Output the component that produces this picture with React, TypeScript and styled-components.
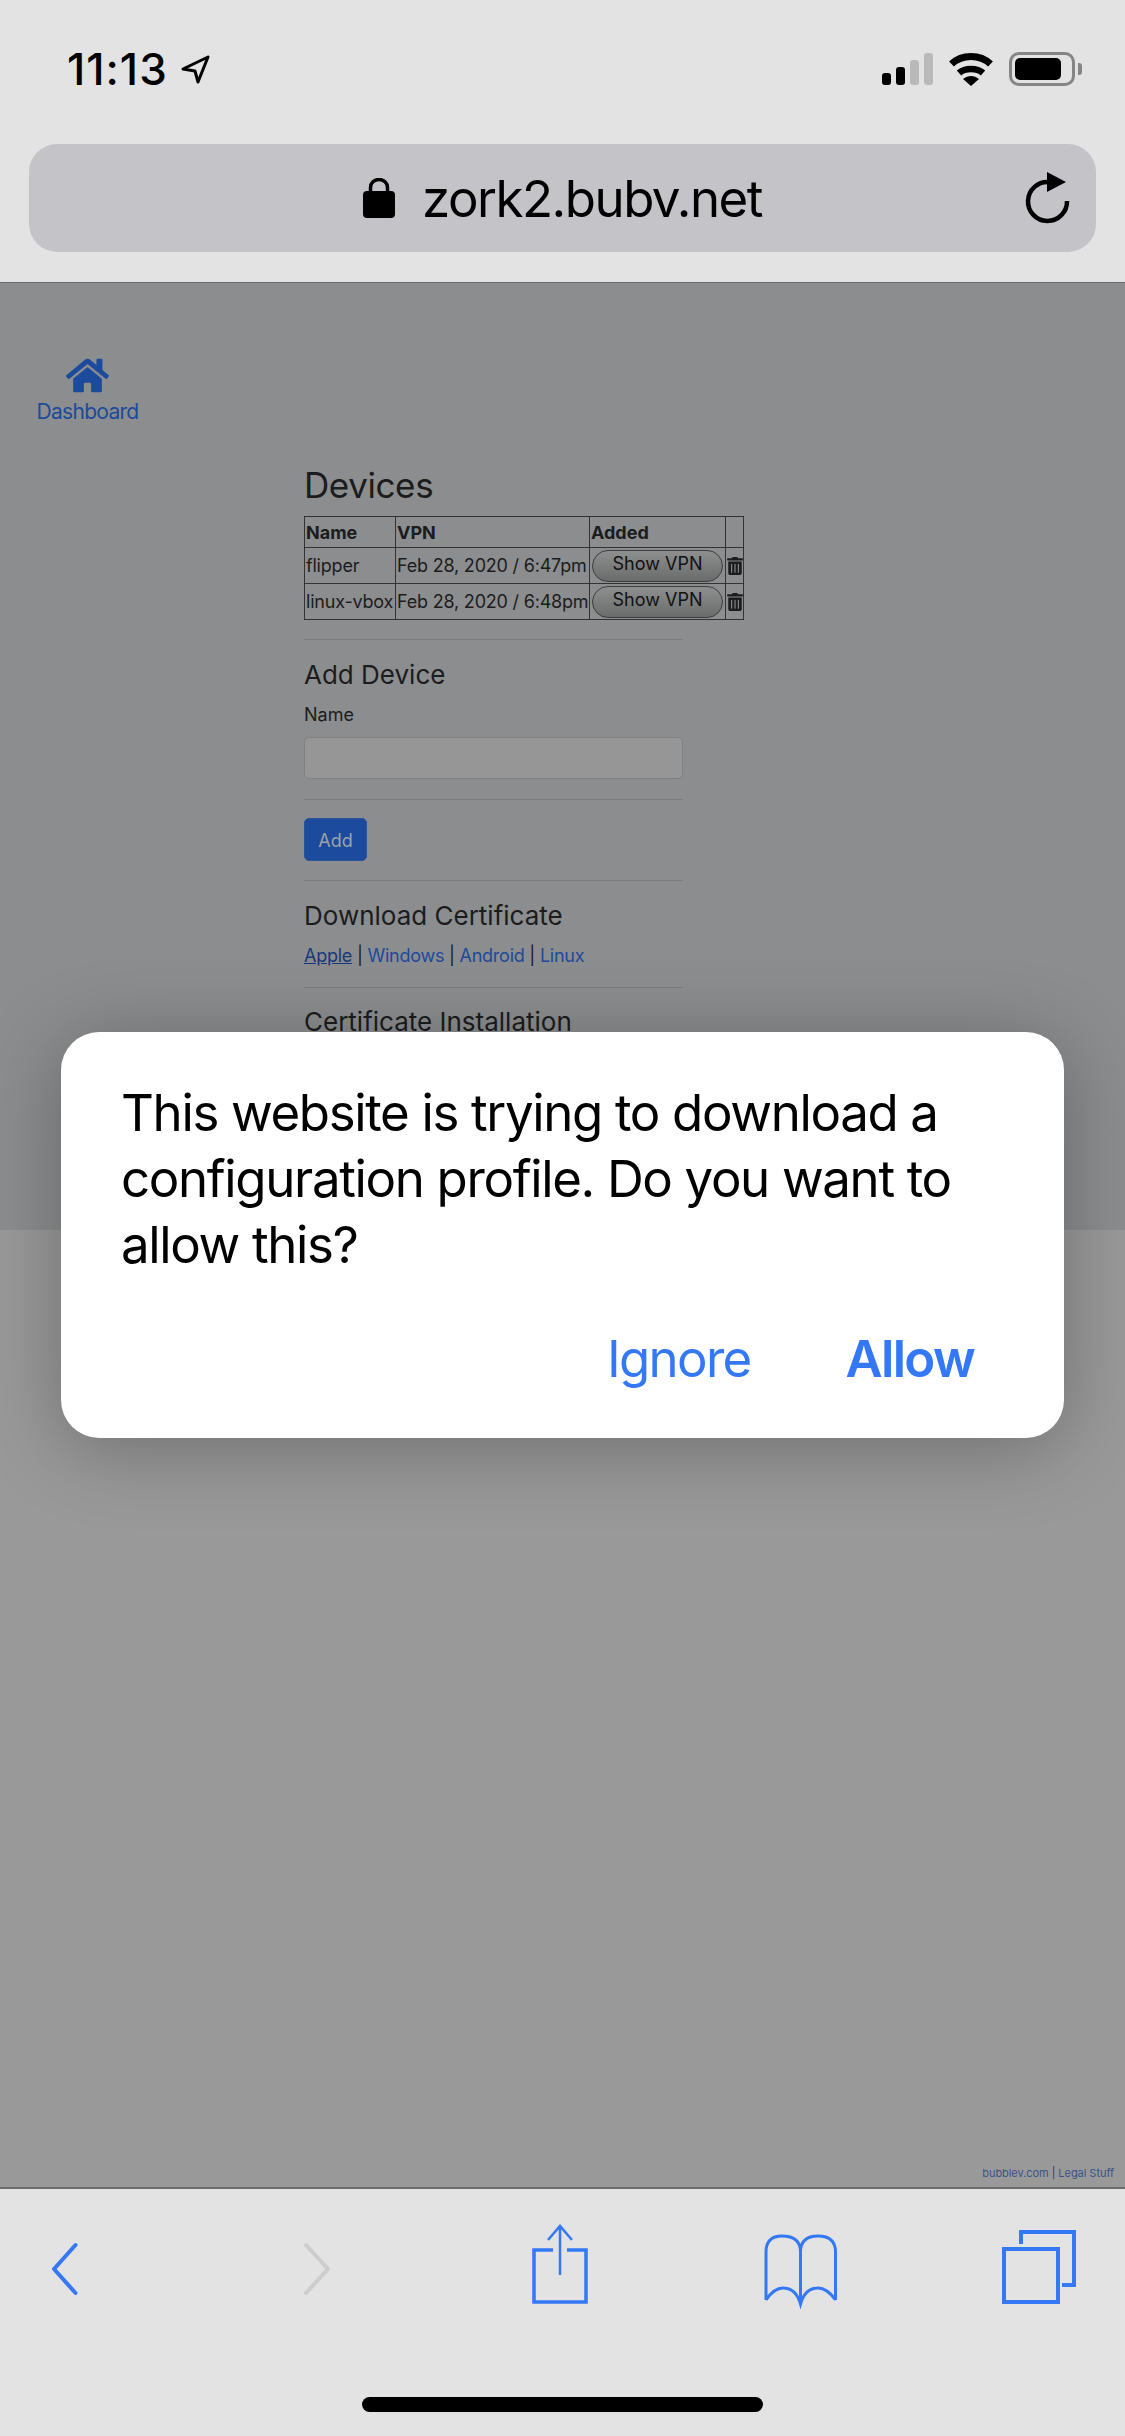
import React from 'react';
import styled, { createGlobalStyle } from 'styled-components';
import { FaHome, FaTrashAlt } from 'react-icons/fa';

const devices = [
  { name: 'flipper', added: 'Feb 28, 2020 / 6:47pm' },
  { name: 'linux-vbox', added: 'Feb 28, 2020 / 6:48pm' },
];

function App() {
  return (
    <>
      <GlobalStyle />
      <Screen>
        <Header>
          <StatusBar>
            <TimeGroup>
              <Time>11:13</Time>
              <svg width="31" height="29" viewBox="0 0 31 29">
                <path d="M28 2 L3 14 L15 16 L18 27 Z" fill="none" stroke="#000" strokeWidth="3" strokeLinejoin="round" />
              </svg>
            </TimeGroup>
            <StatusIcons>
              <Signal>
                <SignalBar $height={12} $on />
                <SignalBar $height={18} $on />
                <SignalBar $height={25} />
                <SignalBar $height={32} />
              </Signal>
              <svg width="46" height="33" viewBox="0 0 46 33">
                <path d="M3.5 11 C14 1 32 1 42.5 11" fill="none" stroke="#000" strokeWidth="7" />
                <path d="M11 20 C17 14.5 29 14.5 35 20" fill="none" stroke="#000" strokeWidth="6.5" />
                <path d="M23 33 L15 26 C20 22 26 22 31 26 Z" fill="#000" />
              </svg>
              <Battery>
                <BatteryCase>
                  <BatteryLevel />
                </BatteryCase>
                <BatteryNub />
              </Battery>
            </StatusIcons>
          </StatusBar>
          <UrlBar>
            <span />
            <UrlHost>
              <svg width="32" height="40" viewBox="0 0 32 40">
                <path d="M7.5 15 V9.5 a8.5 8 0 0 1 17 0 V15" fill="none" stroke="#000" strokeWidth="3.5" />
                <rect x="0" y="13" width="32" height="27" rx="4" fill="#000" />
              </svg>
              <UrlText>zork2.bubv.net</UrlText>
            </UrlHost>
            <ReloadIcon width="45" height="52" viewBox="0 0 45 52">
              <path d="M24 10 A 19.5 19.5 0 1 0 42 29" fill="none" stroke="#000" strokeWidth="4.5" />
              <path d="M22 0 L41 10 L22 20 Z" fill="#000" />
            </ReloadIcon>
          </UrlBar>
        </Header>

        <Page>
          <Main>
            <Sidebar>
              <NavLink>
                <FaHome size={43} />
                <NavLabel>Dashboard</NavLabel>
              </NavLink>
            </Sidebar>
            <Content>
              <PageTitle>Devices</PageTitle>
              <DeviceTable>
                <thead>
                  <tr>
                    <HeadCell $width={91}>Name</HeadCell>
                    <HeadCell $width={194}>VPN</HeadCell>
                    <HeadCell $width={136}>Added</HeadCell>
                    <HeadCell $width={18} />
                  </tr>
                </thead>
                <tbody>
                  {devices.map((device) => (
                    <tr key={device.name}>
                      <Cell>{device.name}</Cell>
                      <Cell>{device.added}</Cell>
                      <Cell>
                        <ShowButton>Show VPN</ShowButton>
                      </Cell>
                      <TrashCell>
                        <FaTrashAlt size={18} />
                      </TrashCell>
                    </tr>
                  ))}
                </tbody>
              </DeviceTable>
              <Divider $before={19} />
              <SectionTitle $top={18}>Add Device</SectionTitle>
              <FieldLabel>Name</FieldLabel>
              <NameInput />
              <Divider $before={20} />
              <AddButton>Add</AddButton>
              <Divider $before={19} />
              <SectionTitle $top={18}>Download Certificate</SectionTitle>
              <LinkRow>
                <PageLink $active>Apple</PageLink> | <PageLink>Windows</PageLink> | <PageLink>Android</PageLink> |{' '}
                <PageLink>Linux</PageLink>
              </LinkRow>
              <Divider $before={20} />
              <SectionTitle $top={17}>Certificate Installation</SectionTitle>
            </Content>
          </Main>
          <Rest>
            <FooterLine>
              <FooterLink>bubblev.com</FooterLink> | <FooterLink>Legal Stuff</FooterLink>
            </FooterLine>
          </Rest>
        </Page>

        <Toolbar>
          <svg width="100" height="90" viewBox="0 0 100 90">
            <path d="M60.5 23 L39 47 L60.5 71" fill="none" stroke="#3478f6" strokeWidth="4" strokeLinecap="round" strokeLinejoin="round" />
          </svg>
          <svg width="100" height="90" viewBox="0 0 100 90">
            <path d="M47 23 L69 47 L47 71" fill="none" stroke="#cdcdcd" strokeWidth="4" strokeLinecap="round" strokeLinejoin="round" />
          </svg>
          <svg width="100" height="90" viewBox="0 0 100 90">
            <path d="M51 28 H32 V80 H84 V28 H65" fill="none" stroke="#3478f6" strokeWidth="3.5" />
            <path d="M58 4 V53 M46 18 L58 4 L70 18" fill="none" stroke="#3478f6" strokeWidth="2.5" />
          </svg>
          <svg width="100" height="90" viewBox="0 0 100 90">
            <path
              d="M20 78 V30 Q20 14 36 14 Q54.5 14 54.5 30 V82 M54.5 30 Q54.5 14 72 14 Q89.5 14 89.5 30 V78 M20 78 Q28 66 37 66 Q50 66 54.5 82 Q59 66 72 66 Q81 66 89.5 78"
              fill="none"
              stroke="#3478f6"
              strokeWidth="3"
            />
          </svg>
          <svg width="100" height="90" viewBox="0 0 100 90">
            <rect x="15" y="27" width="54" height="53" fill="none" stroke="#3478f6" strokeWidth="4" />
            <path d="M32 22 V10 H85 V63 H73" fill="none" stroke="#3478f6" strokeWidth="4" />
          </svg>
        </Toolbar>
        <HomeIndicator />

        <Dialog>
          <DialogText>This website is trying to download a configuration profile. Do you want to allow this?</DialogText>
          <DialogActions>
            <DialogAction>Ignore</DialogAction>
            <DialogAction $primary>Allow</DialogAction>
          </DialogActions>
        </Dialog>
      </Screen>
    </>
  );
}

export default App;

const GlobalStyle = createGlobalStyle`
  body {
    margin: 0;
    font-family: Inter, 'Liberation Sans', sans-serif;
  }
`;

const Screen = styled.div`
  position: relative;
  width: 1125px;
  height: 2436px;
  display: flex;
  flex-direction: column;
  overflow: hidden;
  background-color: #e3e3e3;
`;

const Header = styled.header`
  height: 282px;
  flex-shrink: 0;
  border-bottom: 1px solid #6a6a6a;
`;

const StatusBar = styled.div`
  height: 138px;
  margin-bottom: 6px;
  padding: 0 43px 0 67px;
  display: flex;
  justify-content: space-between;
  align-items: center;
`;

const TimeGroup = styled.div`
  display: flex;
  align-items: center;
  gap: 12px;
`;

const Time = styled.span`
  font-size: 44px;
  font-weight: 500;
  letter-spacing: 1px;
  color: #000;
`;

const StatusIcons = styled.div`
  display: flex;
  align-items: center;
  gap: 15px;
`;

const Signal = styled.div`
  display: flex;
  align-items: flex-end;
  gap: 5px;
  height: 32px;
`;

const SignalBar = styled.div<{ $height: number; $on?: boolean }>`
  width: 9px;
  height: ${(p) => p.$height}px;
  border-radius: 3px;
  background-color: ${(p) => (p.$on ? '#000' : '#b9b9b9')};
`;

const Battery = styled.div`
  display: flex;
  align-items: center;
  gap: 3px;
`;

const BatteryCase = styled.div`
  width: 66px;
  height: 34px;
  box-sizing: border-box;
  padding: 3px;
  border: 3px solid #858585;
  border-radius: 10px;
`;

const BatteryLevel = styled.div`
  width: 46px;
  height: 22px;
  border-radius: 5px;
  background-color: #000;
`;

const BatteryNub = styled.div`
  width: 4px;
  height: 12px;
  border-radius: 0 3px 3px 0;
  background-color: #858585;
`;

const UrlBar = styled.div`
  height: 108px;
  margin: 0 29px;
  padding: 0 26px;
  display: grid;
  grid-template-columns: 1fr auto 1fr;
  align-items: center;
  border-radius: 28px;
  background-color: #c4c4c8;
`;

const UrlHost = styled.div`
  display: flex;
  align-items: center;
  gap: 27px;
`;

const UrlText = styled.span`
  font-size: 51px;
  letter-spacing: -1.5px;
  color: #000;
`;

const ReloadIcon = styled.svg`
  justify-self: end;
`;

const Page = styled.div`
  flex: 1;
  display: flex;
  flex-direction: column;
  background-color: #999;
`;

const Main = styled.main`
  height: 947px;
  flex-shrink: 0;
  display: flex;
  overflow: hidden;
  background-color: #8c8d8e;
`;

const Sidebar = styled.nav`
  width: 304px;
  flex-shrink: 0;
  padding: 71px 0 0 37px;
  box-sizing: border-box;
`;

const NavLink = styled.a`
  width: 101px;
  display: flex;
  flex-direction: column;
  align-items: center;
  color: #1c4a9c;
`;

const NavLabel = styled.span`
  margin-top: 2px;
  font-size: 21px;
  line-height: 26px;
  letter-spacing: -0.7px;
`;

const Content = styled.section`
  width: 379px;
  padding-top: 181px;
  color: #1b1c1d;
`;

const PageTitle = styled.h1`
  margin: 0 0 10px;
  font-size: 35px;
  font-weight: 400;
  line-height: 42px;
  letter-spacing: -0.4px;
`;

const DeviceTable = styled.table`
  width: 439px;
  table-layout: fixed;
  border-collapse: collapse;
  font-size: 18px;
`;

const HeadCell = styled.th<{ $width: number }>`
  box-sizing: border-box;
  width: ${(p) => p.$width}px;
  height: 31px;
  padding: 0 1px;
  border: 1px solid #333;
  text-align: left;
  font-weight: 700;
`;

const Cell = styled.td`
  height: 35px;
  padding: 0 1px;
  border: 1px solid #333;
  white-space: nowrap;
  letter-spacing: -0.2px;
`;

const TrashCell = styled(Cell)`
  padding: 0;
  text-align: center;
  color: #1b1c1d;

  svg {
    display: block;
    margin: 0 auto;
  }
`;

const ShowButton = styled.button`
  display: block;
  width: 131px;
  height: 32px;
  margin: 0 auto;
  padding: 0 0 4px;
  border: 1px solid #3d3d3d;
  border-radius: 16px;
  background: linear-gradient(#8e8f8f, #6a6b6b);
  font-family: inherit;
  font-size: 18px;
  color: #111;
`;

const Divider = styled.hr<{ $before: number }>`
  width: 379px;
  height: 1px;
  margin: ${(p) => p.$before}px 0 0;
  border: none;
  background-color: #7c7d7e;
`;

const SectionTitle = styled.h2<{ $top: number }>`
  margin: ${(p) => p.$top}px 0 0;
  font-size: 26px;
  font-weight: 400;
  line-height: 33px;
  white-space: nowrap;
`;

const FieldLabel = styled.label`
  display: block;
  margin: 13px 0 11px;
  font-size: 18px;
  line-height: 22px;
`;

const NameInput = styled.input`
  display: block;
  width: 379px;
  height: 42px;
  box-sizing: border-box;
  border: 1px solid #7f8081;
  border-radius: 5px;
  background-color: #969696;
`;

const AddButton = styled.button`
  display: block;
  width: 63px;
  height: 43px;
  margin-top: 18px;
  padding: 2px 0 0;
  border: 1px solid #2a5398;
  border-radius: 5px;
  background-color: #1c4a9c;
  font-family: inherit;
  font-size: 18px;
  color: #9aa3ad;
`;

const LinkRow = styled.div`
  margin-top: 13px;
  font-size: 18px;
  line-height: 22px;
  letter-spacing: -0.25px;
`;

const PageLink = styled.a<{ $active?: boolean }>`
  color: ${(p) => (p.$active ? '#17397a' : '#1c4a9c')};
  text-decoration: ${(p) => (p.$active ? 'underline' : 'none')};
`;

const Rest = styled.div`
  flex: 1;
  display: flex;
  justify-content: flex-end;
  align-items: flex-end;
  padding: 0 11px 7px 0;
`;

const FooterLine = styled.div`
  font-size: 11px;
  line-height: 14px;
  letter-spacing: -0.05px;
  color: #2e3f60;
`;

const FooterLink = styled.a`
  color: #3a5488;
`;

const Toolbar = styled.footer`
  height: 249px;
  flex-shrink: 0;
  box-sizing: border-box;
  padding: 33px 36px 0 15px;
  display: flex;
  justify-content: space-between;
  align-items: flex-start;
  border-top: 2px solid #6b6b6b;
`;

const HomeIndicator = styled.div`
  position: absolute;
  left: 362px;
  bottom: 24px;
  width: 401px;
  height: 15px;
  border-radius: 8px;
  background-color: #000;
`;

const Dialog = styled.div`
  position: absolute;
  top: 1032px;
  left: 61px;
  width: 1003px;
  height: 406px;
  box-sizing: border-box;
  padding: 48px 60px 0 60px;
  border-radius: 38px;
  background-color: #fff;
  box-shadow: 0 10px 80px rgba(0, 0, 0, 0.28);
`;

const DialogText = styled.p`
  margin: 0;
  font-size: 51px;
  line-height: 66px;
  letter-spacing: -1.35px;
  color: #000;
`;

const DialogActions = styled.div`
  margin-top: 48px;
  padding-right: 30px;
  display: flex;
  justify-content: flex-end;
  gap: 95px;
`;

const DialogAction = styled.button<{ $primary?: boolean }>`
  padding: 0;
  border: none;
  background: none;
  font-family: inherit;
  font-size: 51px;
  font-weight: ${(p) => (p.$primary ? 600 : 400)};
  line-height: 66px;
  letter-spacing: -1.7px;
  color: #3478f6;
`;
